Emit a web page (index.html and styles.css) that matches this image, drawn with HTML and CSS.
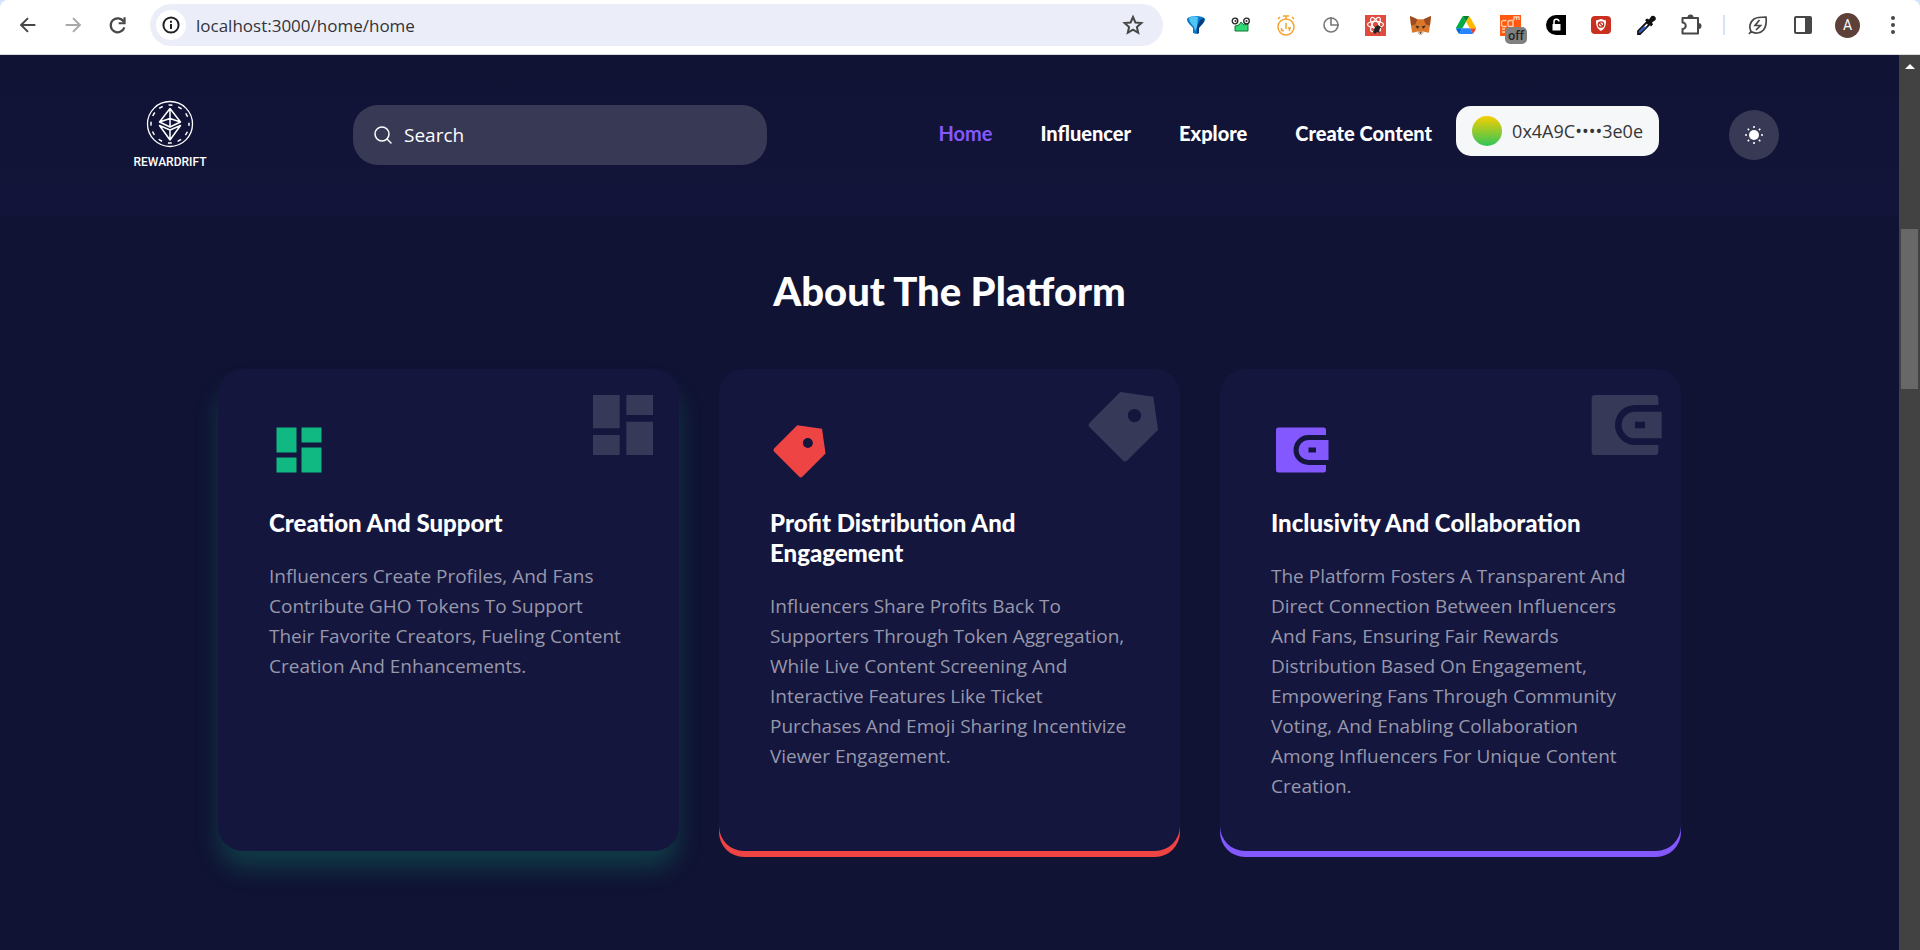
FILE: index.html
```html
<!DOCTYPE html>
<html lang="en">
<head>
<meta charset="utf-8">
<title>Rewardrift</title>
<link rel="stylesheet" href="styles.css">
</head>
<body>
<div class="toolbar-wrap">
<div class="toolbar">
  <button class="tool" aria-label="Back"><svg viewBox="0 0 24 24" width="22" height="22" fill="none" stroke="#474747" stroke-width="2.2"><path d="M20 12H5M12 4.500L4.500 12l7.500 7.500"/></svg></button>
  <button class="tool" aria-label="Forward"><svg viewBox="0 0 24 24" width="22" height="22" fill="none" stroke="#a9a9a9" stroke-width="2.200"><path d="M4 12h15M12 4.500l7.500 7.500-7.500 7.500"/></svg></button>
  <button class="tool" aria-label="Reload"><svg viewBox="0 0 24 24" width="23" height="23"><path d="M18.500 8A7.300 7.300 0 1 0 19.200 14" fill="none" stroke="#474747" stroke-width="2.300"/><path d="M20.500 3.500v7.300h-7.300V8.500h5V3.500z" fill="#474747"/></svg></button>
  <div class="address">
    <button class="site-info" aria-label="Site information"><svg viewBox="0 0 20 20" width="20" height="20"><circle cx="10" cy="10" r="7.600" fill="none" stroke="#202124" stroke-width="2"/><path d="M10 9v5M10 5.800v2" stroke="#202124" stroke-width="2"/></svg></button>
    <input class="url" type="text" aria-label="Address" value="localhost:3000/home/home">
    <button class="tool" aria-label="Bookmark"><svg viewBox="0 0 24 24" width="24" height="24" fill="none" stroke="#474747" stroke-width="2"><path d="M12 4l2.400 5.500 6 .5-4.500 4 1.300 5.800L12 16.700l-5.200 3.100L8.100 14l-4.500-4 6-.5z"/></svg></button>
  </div>
  <div class="extensions">
    <button class="tool" aria-label="Filter"><svg viewBox="0 0 20 20" width="20" height="20"><path d="M1 4c2-4 16-4 18 0 0 4-4 6-6 9v5l-3 1-3-1v-5C5 10 1 8 1 4z" fill="#0a78cc"/><path d="M3 3c3-2 7-2 9-1l-1 10-2 4-1-4C6 9 3 7 3 3z" fill="#51c6f5"/><path d="M11 12l3-7 4-2c1 4-3 7-5 10v5l-2 1z" fill="#073b78"/></svg></button>
    <button class="tool" aria-label="Robot"><svg viewBox="0 0 20 18" width="20" height="18"><path d="M4 10l4-1 2-3 3 3 4-1v7H4z" fill="#2fd873" stroke="#173" stroke-width="1"/><circle cx="4" cy="5" r="2.800" fill="#fff" stroke="#222" stroke-width="1.300"/><circle cx="15.500" cy="5" r="2.800" fill="#fff" stroke="#222" stroke-width="1.300"/><circle cx="4.500" cy="5" r="1" fill="#222"/><circle cx="15.500" cy="5" r="1" fill="#222"/></svg></button>
    <button class="tool" aria-label="Timer"><svg viewBox="0 0 20 22" width="20" height="22" fill="none" stroke="#f6a42c" stroke-width="1.500"><circle cx="10" cy="13" r="8"/><path d="M10 9v6M7 2h6M10 2v3M2 5l2-2M18 5l-2-2M5.500 14v2.500H8M12 14h3M13.500 14v3"/></svg></button>
    <button class="tool" aria-label="Clock"><svg viewBox="0 0 18 18" width="18" height="18" fill="none" stroke="#777" stroke-width="1.600"><circle cx="9" cy="9" r="7"/><path d="M9 1v8h8"/></svg></button>
    <button class="tool" aria-label="React tools"><svg viewBox="0 0 21 21" width="21" height="21"><path d="M0 0h21v21H0z" fill="#df4b3d"/><g fill="none" stroke="#fff" stroke-width="1.200"><ellipse cx="10.500" cy="9.500" rx="8" ry="3.200"/><ellipse cx="10.500" cy="9.500" rx="8" ry="3.200" transform="rotate(60 10.500 9.500)"/><ellipse cx="10.500" cy="9.500" rx="8" ry="3.200" transform="rotate(120 10.500 9.500)"/></g><path d="M8 17l2-5 3-2 3 2-2 3 1 3-3-1-2 2z" fill="#222"/></svg></button>
    <button class="tool" aria-label="Fox wallet"><svg viewBox="0 0 20 18" width="21" height="19"><path d="M0 0l7 3h6l7-3-1 9-1 7-5-1-2 3H9l-2-3-5 1-1-7z" fill="#d9772b"/><path d="M0 0l7 3-2 5-4 1zM20 0l-7 3 2 5 4 1z" fill="#9b4a22"/><path d="M5 9l4 1-2 2zM15 9l-4 1 2 2z" fill="#2c2a35"/><path d="M6 14l3 1h2l3-1-3 4H9z" fill="#d8c7ba"/><path d="M9 15.500h2l-1 1.500z" fill="#222"/></svg></button>
    <button class="tool" aria-label="Drive"><svg viewBox="0 0 87 78" width="20" height="18"><path d="M6.600 66.850l3.850 6.650c.8 1.400 1.950 2.500 3.300 3.300L27.500 53H0c0 1.550.4 3.100 1.200 4.500z" fill="#0066da"/><path d="M43.650 25L29.900 1.200c-1.350.8-2.500 1.900-3.300 3.300l-25.400 44A9 9 0 0 0 0 53h27.500z" fill="#00ac47"/><path d="M73.550 76.800c1.350-.8 2.500-1.900 3.300-3.300l9.250-16A9 9 0 0 0 87.300 53H59.800l5.850 11.500z" fill="#ea4335"/><path d="M43.650 25L57.400 1.200C56.050.4 54.500 0 52.900 0H34.400c-1.600 0-3.150.45-4.500 1.200z" fill="#00832d"/><path d="M59.800 53H27.500L13.750 76.800c1.350.8 2.900 1.200 4.500 1.200h50.800c1.600 0 3.150-.45 4.500-1.200z" fill="#2684fc"/><path d="M73.400 26.500L60.700 4.500c-.8-1.400-1.950-2.500-3.300-3.300L43.650 25 59.800 53h27.450c0-1.550-.4-3.100-1.200-4.500z" fill="#ffba00"/></svg></button>
    <button class="tool" aria-label="Code tool, off"><svg viewBox="0 0 21 21" width="21" height="21"><path d="M0 0h21v21H0z" fill="#ff5a10"/><g fill="none" stroke="#ffd0b0" stroke-width="1.300"><path d="M6.500 5.500H3.500a2 2 0 0 0-2 2v2a2 2 0 0 0 2 2h3M10 5.500h3v6h-3a2 2 0 0 1-2-2v-2a2 2 0 0 1 2-2zM14 5V2h5v3M16.500 2v3M2 14h3M2 17h3"/></g></svg><span class="badge">off</span></button>
    <button class="tool" aria-label="Lock"><svg viewBox="0 0 20 20" width="20" height="20"><path d="M20 0v20H10A10 10 0 0 1 10 0z" fill="#000"/><path d="M6.500 9h8v6.500h-8z" fill="#fff"/><path d="M8 9V7a2.500 2.500 0 0 1 5-.5" fill="none" stroke="#fff" stroke-width="1.500"/></svg></button>
    <button class="tool" aria-label="Ad blocker"><svg viewBox="0 0 20 18" width="20" height="18"><rect width="20" height="18" rx="4" fill="#c9301f"/><path d="M10 3l5 1.500c0 5-1 8-5 10.500C6 12.500 5 9.500 5 4.500z" fill="#fff"/><circle cx="10" cy="8.500" r="2.700" fill="none" stroke="#c9301f" stroke-width="1.300"/><path d="M8 6.500l4 4" stroke="#c9301f" stroke-width="1.300"/></svg></button>
    <button class="tool" aria-label="Colour picker"><svg viewBox="0 0 20 20" width="20" height="20"><path d="M11 7L2 16v3h2l9-9z" fill="#fff" stroke="#111" stroke-width="1.800"/><path d="M8 11.500l3 .5-7 6H3v-2z" fill="#3159c9"/><path d="M9 5l2-1.500 2 1L15.500 1a3 3 0 0 1 4 4L16 7.500l1 2-2 2z" fill="#111"/></svg></button>
    <button class="tool" aria-label="Extensions"><svg viewBox="0 0 22 22" width="22" height="22"><path d="M2.500 4h15.500v15.500H2.500v-4.500a3.200 3.200 0 0 0 0-6.500z" fill="none" stroke="#474747" stroke-width="2" stroke-linejoin="round"/><path d="M7.500 3.500a3 3 0 0 1 6 0zM18.500 9a3 3 0 0 1 0 6z" fill="#474747"/></svg></button>
  </div>
  <span class="divider"></span>
  <button class="tool" aria-label="Energy saver"><svg viewBox="0 0 20 20" width="20" height="20" fill="none" stroke="#474747" stroke-width="1.700"><path d="M3 16.500C.5 12 2 7 6 4c3-2 8-2 12-2 .5 4 .5 9-2.500 13-3 3.500-8.500 4-12.500 1.500L1 19M11.500 5L7 10.500h5.500L8 15"/></svg></button>
  <button class="tool" aria-label="Side panel"><svg viewBox="0 0 18 18" width="18" height="18"><rect x="1" y="1" width="16" height="16" rx="1" fill="#fff" stroke="#474747" stroke-width="2"/><path d="M11 1h6v16h-6z" fill="#474747"/></svg></button>
  <button class="tool" aria-label="Profile"><span class="avatar">A</span></button>
  <button class="tool" aria-label="Menu"><svg viewBox="0 0 6 20" width="6" height="20" fill="#474747"><circle cx="3" cy="3" r="2"/><circle cx="3" cy="10" r="2"/><circle cx="3" cy="17" r="2"/></svg></button>
</div>
</div>

<div class="viewport">
  <div class="page">
    <header class="header">
      <a class="logo" href="#" aria-label="Rewardrift home">
        <svg viewBox="0 0 48 48" width="48" height="48" fill="none" stroke="#fff" stroke-width="1.300"><circle cx="24" cy="24" r="22.500"/><circle cx="24" cy="24" r="19" stroke-dasharray="3.970 5.970" stroke-dashoffset="2" stroke-width="1.500"/><path d="M24 8.500L34.500 22 24 27 13.500 22zM24 8.500V27M13.500 22L24 18.500 34.500 22M13.500 25.500L24 30l10.500-4.500L24 40zM24 30v10" stroke-width="1.500" stroke-linejoin="round"/></svg>
        <span class="logo-name">REWARDRIFT</span>
      </a>
      <label class="search">
        <svg viewBox="0 0 18 18" width="18" height="18" fill="none" stroke="#fff" stroke-width="1.500" stroke-linecap="round"><circle cx="8" cy="8" r="7"/><path d="M13 13l4 4"/></svg>
        <input type="text" placeholder="Search" aria-label="Search">
      </label>
      <nav class="nav">
        <a class="active" href="#">Home</a>
        <a href="#">Influencer</a>
        <a href="#">Explore</a>
        <a href="#">Create Content</a>
      </nav>
      <button class="wallet"><span class="wallet-dot"></span>0x4A9C••••3e0e</button>
      <button class="theme" aria-label="Toggle theme"><svg viewBox="0 0 20 20" width="20" height="20"><circle cx="10" cy="10" r="5" fill="#fff"/><path d="M10 1v2M10 17v2M1 10h2M17 10h2M3.700 3.700l1.400 1.400M14.900 14.900l1.400 1.400M3.700 16.300l1.400-1.400M14.900 5.100l1.400-1.400" stroke="#fff" stroke-width="1.600"/></svg></button>
    </header>

    <main class="about">
      <h1>About The Platform</h1>
      <div class="cards">
        <article class="card card-green">
          <svg class="ghost" viewBox="0 0 24 24"><path d="M3 13h8V3H3zm0 8h8v-6H3zm10 0h8V11h-8zm0-18v6h8V3z"/></svg>
          <svg class="icon" viewBox="0 0 24 24"><path d="M3 13h8V3H3zm0 8h8v-6H3zm10 0h8V11h-8zm0-18v6h8V3z"/></svg>
          <h2>Creation And Support</h2>
          <p>Influencers Create Profiles, And Fans Contribute GHO Tokens To Support Their Favorite Creators, Fueling Content Creation And Enhancements.</p>
        </article>
        <article class="card card-red">
          <svg class="ghost" viewBox="0 0 24 24"><path d="M10.900 2.100l9.899 1.415 1.414 9.900-9.192 9.192a1 1 0 0 1-1.414 0l-9.900-9.900a1 1 0 0 1 0-1.414zm2.828 8.486a2 2 0 1 0 2.828-2.829 2 2 0 0 0-2.828 2.829z"/></svg>
          <svg class="icon" viewBox="0 0 24 24"><path d="M10.900 2.100l9.899 1.415 1.414 9.900-9.192 9.192a1 1 0 0 1-1.414 0l-9.900-9.900a1 1 0 0 1 0-1.414zm2.828 8.486a2 2 0 1 0 2.828-2.829 2 2 0 0 0-2.828 2.829z"/></svg>
          <h2>Profit Distribution And Engagement</h2>
          <p>Influencers Share Profits Back To Supporters Through Token Aggregation, While Live Content Screening And Interactive Features Like Ticket Purchases And Emoji Sharing Incentivize Viewer Engagement.</p>
        </article>
        <article class="card card-purple">
          <svg class="ghost" viewBox="0 0 24 24"><path d="M22 6h-7a6 6 0 1 0 0 12h7v2a1 1 0 0 1-1 1H3a1 1 0 0 1-1-1V4a1 1 0 0 1 1-1h18a1 1 0 0 1 1 1zm-7 2h8v8h-8a4 4 0 1 1 0-8zm0 3v2h3v-2z"/></svg>
          <svg class="icon" viewBox="0 0 24 24"><path d="M22 6h-7a6 6 0 1 0 0 12h7v2a1 1 0 0 1-1 1H3a1 1 0 0 1-1-1V4a1 1 0 0 1 1-1h18a1 1 0 0 1 1 1zm-7 2h8v8h-8a4 4 0 1 1 0-8zm0 3v2h3v-2z"/></svg>
          <h2>Inclusivity And Collaboration</h2>
          <p>The Platform Fosters A Transparent And Direct Connection Between Influencers And Fans, Ensuring Fair Rewards Distribution Based On Engagement, Empowering Fans Through Community Voting, And Enabling Collaboration Among Influencers For Unique Content Creation.</p>
        </article>
      </div>
    </main>
  </div>
  <div class="scrollbar" aria-hidden="true"><span class="arrow"></span><span class="thumb"></span></div>
</div>
</body>
</html>
```
FILE: styles.css
```css
* { box-sizing: border-box; }

body {
  margin: 0;
  min-height: 100vh;
  display: flex;
  flex-direction: column;
  background: #101334;
  font-family: "Open Sans", "Noto Sans", sans-serif;
  color: #fff;
}

button {
  border: 0;
  padding: 0;
  background: none;
  font: inherit;
  color: inherit;
  cursor: pointer;
}

input { font: inherit; min-width: 0; }
a { color: inherit; text-decoration: none; }
svg { display: block; }

/* Browser toolbar */
.toolbar-wrap { background: #d3e3fd; }

.toolbar {
  display: flex;
  align-items: center;
  padding: 4px 5px 8px;
  background: #fff;
  border-bottom: 1px solid #dcdcdc;
  border-radius: 8px 8px 0 0;
}

.tool {
  position: relative;
  display: grid;
  place-items: center;
  flex: 0 0 45px;
  width: 45px;
  height: 42px;
}

.address {
  display: flex;
  flex: 1;
  align-items: center;
  height: 42px;
  margin: 0 10px;
  padding: 0 8px 0 6px;
  border-radius: 21px;
  background: #ebeef8;
}

.site-info {
  display: grid;
  place-items: center;
  width: 30px;
  height: 30px;
  border-radius: 50%;
  background: #fff;
}

.url {
  flex: 1;
  padding: 0 10px;
  border: 0;
  background: none;
  font-size: 17px;
  color: #33343a;
}

.extensions { display: flex; }

.badge {
  position: absolute;
  right: 6px;
  bottom: 2px;
  padding: 0 3px;
  border-radius: 5px;
  background: #808080;
  font-size: 12px;
  font-weight: 600;
  line-height: 17px;
  color: #222;
}

.divider {
  width: 2px;
  height: 20px;
  margin: 0 10px;
  background: #d3e3fd;
}

.avatar {
  display: grid;
  place-items: center;
  width: 25px;
  height: 25px;
  border-radius: 50%;
  background: #5d4037;
  font-family: Roboto, sans-serif;
  font-size: 14px;
  color: #fff;
}

/* Page */
.viewport { display: flex; flex: 1; }
.page { flex: 1; min-width: 0; }

.header {
  display: flex;
  align-items: center;
  height: 160px;
  padding: 0 120px 0 134px;
  background: linear-gradient(#101334, #121539);
}

.logo {
  display: flex;
  flex-direction: column;
  align-items: center;
  gap: 8px;
  width: 72px;
  padding-bottom: 2px;
}

.logo-name {
  font-family: Roboto, sans-serif;
  font-size: 12px;
  font-weight: 500;
  line-height: 12px;
}

.search {
  display: flex;
  flex: 0 1 414px;
  align-items: center;
  gap: 12px;
  height: 60px;
  margin-left: 147px;
  padding: 0 21px;
  border-radius: 25px;
  background: #373955;
}

.search input {
  flex: 1;
  padding: 0;
  border: 0;
  background: none;
  font-size: 19px;
  color: #fff;
}

.search input::placeholder { color: #fff; opacity: 1; }

.nav {
  display: flex;
  gap: 48px;
  margin-left: auto;
  padding-bottom: 4px;
  font-family: Lato, sans-serif;
  font-size: 20px;
  font-weight: 900;
  line-height: 30px;
  white-space: nowrap;
}

.nav .active { font-weight: 700; color: #8358ff; }

.wallet {
  display: flex;
  align-items: center;
  gap: 10px;
  height: 50px;
  margin: 0 70px 8px 24px;
  padding: 0 16px;
  border-radius: 15px;
  background: #f5f7f9;
  font-size: 18px;
  color: #353535;
  white-space: nowrap;
}

.wallet-dot {
  width: 30px;
  height: 30px;
  border-radius: 50%;
  background: linear-gradient(#f7cf00, #30c55a);
}

.theme {
  display: grid;
  place-items: center;
  width: 50px;
  height: 50px;
  border-radius: 50%;
  background: #373955;
}

.about {
  max-width: 1463px;
  margin: 0 auto;
  padding: 46px 0 60px;
}

h1, h2 {
  margin: 0;
  font-family: Lato, sans-serif;
  font-weight: 900;
}

h1 {
  margin-bottom: 48px;
  font-size: 40px;
  line-height: 60px;
  text-align: center;
}

.cards {
  display: grid;
  grid-template-columns: repeat(3, 1fr);
  gap: 40px;
}

.card {
  position: relative;
  padding: 51px 50px 50px 51px;
  border-radius: 25px;
  background: #14163e;
}

.card-green { box-shadow: 0 18px 25px -2px rgba(16, 185, 129, 0.25); }
.card-green .icon { fill: #10b981; }
.card-red { box-shadow: 0 6px #ef4444; }
.card-red .icon { fill: #ef4444; }
.card-purple { box-shadow: 0 6px #8358ff; }
.card-purple .icon { fill: #8358ff; }

.icon { width: 60px; height: 60px; }

.ghost {
  position: absolute;
  top: 16px;
  right: 16px;
  width: 80px;
  height: 80px;
  fill: #373959;
}

h2 {
  margin-top: 28px;
  font-size: 24px;
  line-height: 30px;
}

p {
  margin: 23px 0 0;
  font-size: 19px;
  line-height: 30px;
  color: #9798ab;
}

/* Scrollbar */
.scrollbar {
  display: flex;
  flex-direction: column;
  align-items: center;
  width: 21px;
  padding-top: 9px;
  background: #424242;
}

.arrow {
  border: 5px solid transparent;
  border-top: 0;
  border-bottom-color: #fff;
}

.thumb {
  width: 17px;
  height: 160px;
  margin-top: 160px;
  background: #686868;
}
```
